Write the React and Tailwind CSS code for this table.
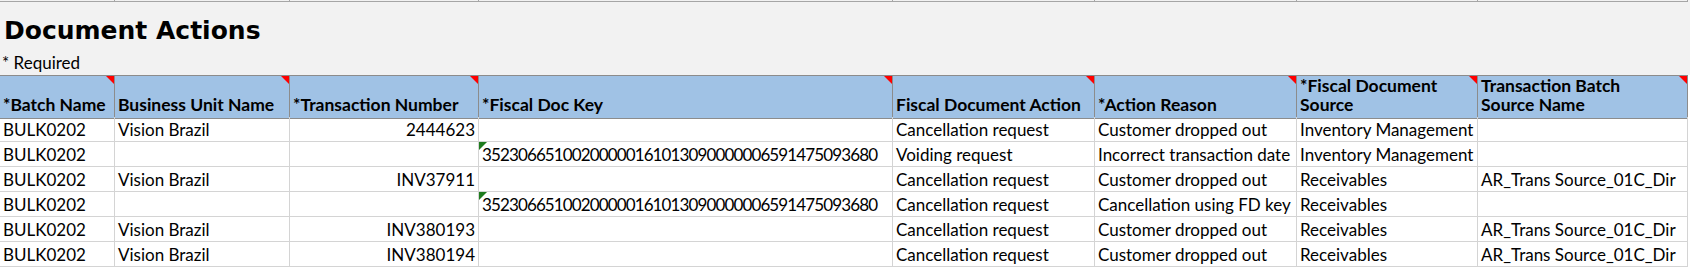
import React from 'react';

const grid = 'grid grid-cols-[115px_175px_189px_414px_202px_202px_181px_210px]';

const headers = [
    ['*Batch Name'],
    ['Business Unit Name'],
    ['*Transaction Number'],
    ['*Fiscal Doc Key'],
    ['Fiscal Document Action'],
    ['*Action Reason'],
    ['*Fiscal Document', 'Source'],
    ['Transaction Batch', 'Source Name'],
];

const FD_KEY = '35230665100200000161013090000006591475093680';

const rows = [
    ['BULK0202', 'Vision Brazil', '2444623', '', 'Cancellation request', 'Customer dropped out', 'Inventory Management', ''],
    ['BULK0202', '', '', FD_KEY, 'Voiding request', 'Incorrect transaction date', 'Inventory Management', ''],
    ['BULK0202', 'Vision Brazil', 'INV37911', '', 'Cancellation request', 'Customer dropped out', 'Receivables', 'AR_Trans Source_01C_Dir'],
    ['BULK0202', '', '', FD_KEY, 'Cancellation request', 'Cancellation using FD key', 'Receivables', ''],
    ['BULK0202', 'Vision Brazil', 'INV380193', '', 'Cancellation request', 'Customer dropped out', 'Receivables', 'AR_Trans Source_01C_Dir'],
    ['BULK0202', 'Vision Brazil', 'INV380194', '', 'Cancellation request', 'Customer dropped out', 'Receivables', 'AR_Trans Source_01C_Dir'],
];

function BodyCell({ value, col }) {
    const isKey = col === 3 && value;
    return (
        <div
            className={`relative h-[25px] border-r border-b border-[#d4d4d4] px-[3px] leading-[25px] whitespace-nowrap ${
                col === 2 ? 'text-right' : 'text-left'
            } ${isKey ? 'tracking-[-0.88px]' : ''}`}
        >
            {isKey && (
                <span className="absolute left-0 top-0 w-0 h-0 border-t-[8px] border-t-[#1e7b1e] border-r-[8px] border-r-transparent" />
            )}
            {value}
        </div>
    );
}

export default function App() {
    return (
        <div className="w-[1690px] h-[267px] overflow-hidden bg-white text-black font-['Lato',sans-serif] text-[17px]">
            {/* title band */}
            <div className="bg-[#f2f2f2] w-[1690px]">
                <div className={`${grid} h-[2px]`}>
                    {headers.map((h, i) => (
                        <div key={i} className="border-r border-b border-[#a6a6a6]" />
                    ))}
                </div>
                <div className="h-[48px] flex items-end pb-[5px] pl-[4px]">
                    <h1 className="font-['DejaVu_Sans',sans-serif] font-bold text-[25px] leading-[28px]">
                        Document Actions
                    </h1>
                </div>
                <div className="h-[25px] leading-[25px] pl-[2px]">* Required</div>
            </div>

            {/* header */}
            <div className={`${grid} h-[42px] bg-white`}>
                {headers.map((lines, i) => (
                    <div
                        key={i}
                        className="relative bg-[#a0c2e5] border-t border-r border-b border-[#8c8c8c] flex items-end px-[3px] pb-[4px] font-bold text-[17.5px] leading-[19px] whitespace-nowrap"
                    >
                        <span className="absolute right-0 top-0 w-0 h-0 border-t-[8px] border-t-[#ff0000] border-l-[8px] border-l-transparent" />
                        <span className="flex flex-col">
                            {lines.map((l, li) => (
                                <span key={li}>{l}</span>
                            ))}
                        </span>
                    </div>
                ))}
            </div>

            {/* rows */}
            {rows.map((r, ri) => (
                <div key={ri} className={grid}>
                    {r.map((v, ci) => (
                        <BodyCell key={ci} value={v} col={ci} />
                    ))}
                </div>
            ))}
        </div>
    );
}
